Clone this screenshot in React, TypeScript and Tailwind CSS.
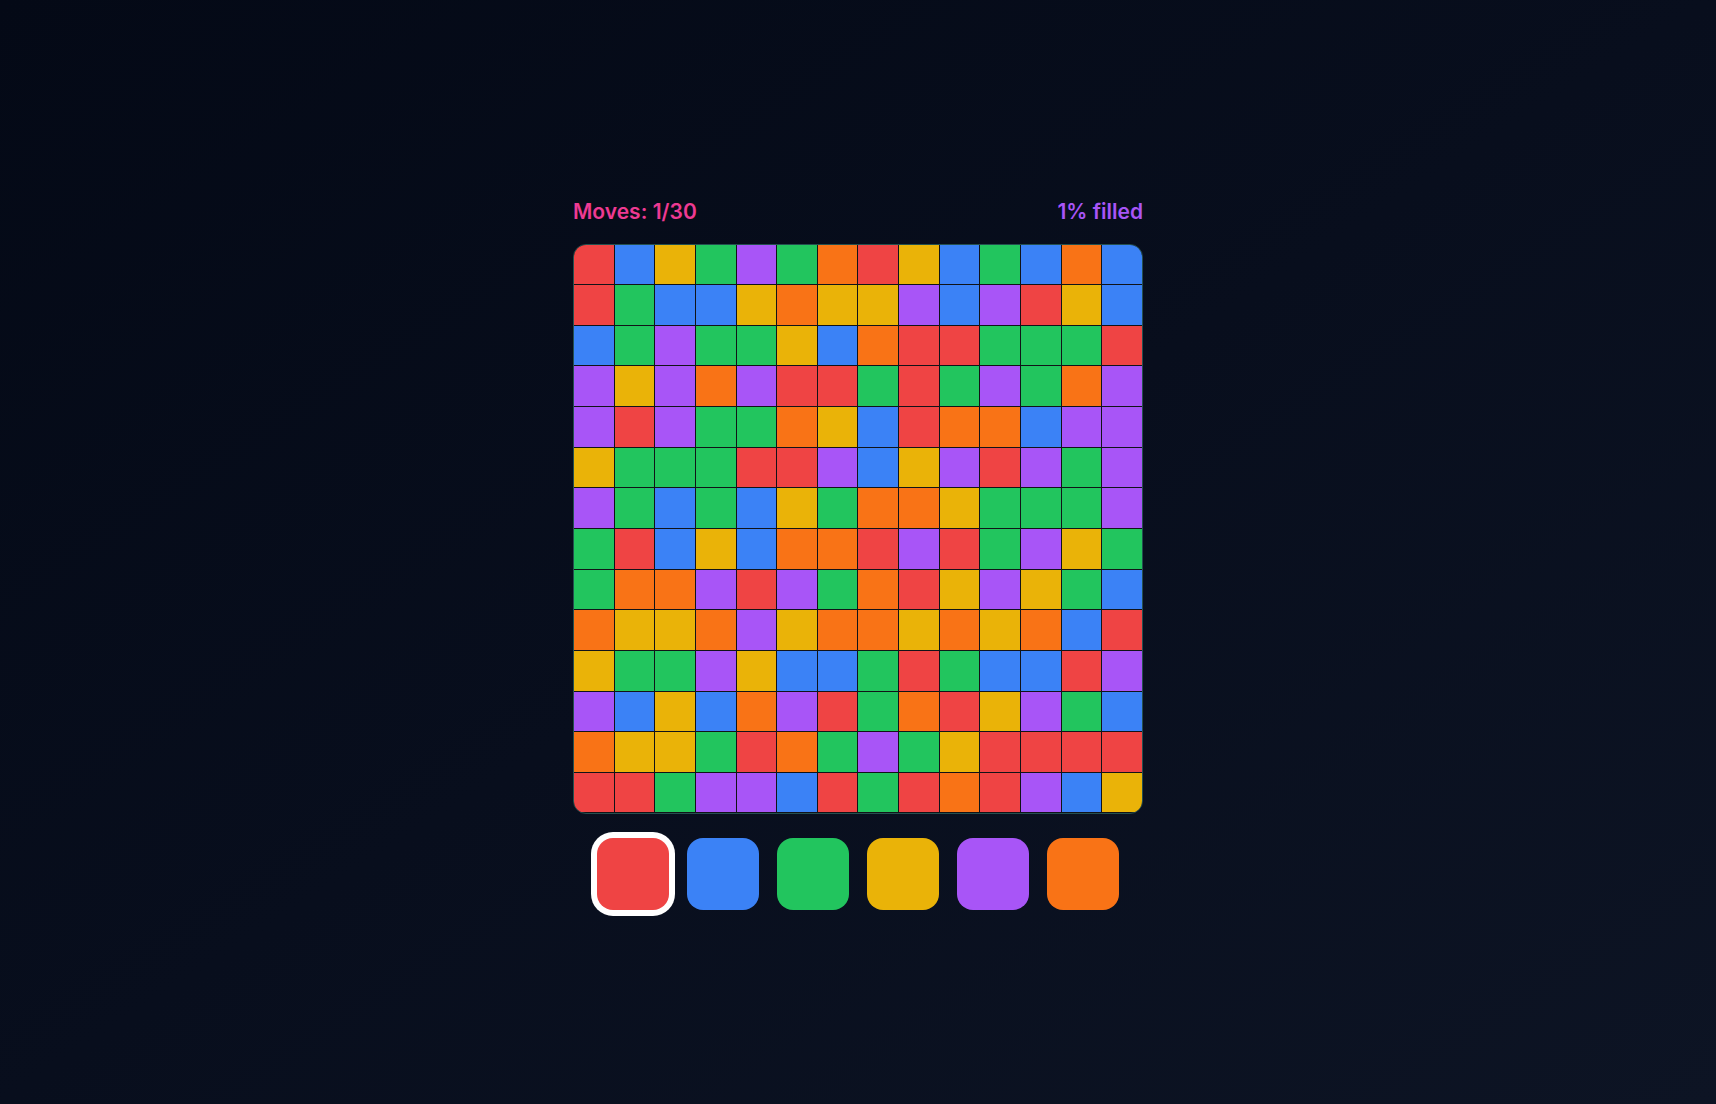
import { useState } from "react";

type Color = "R" | "B" | "G" | "Y" | "P" | "O";

const COLORS: Record<Color, string> = {
  R: "bg-[#ef4444]",
  B: "bg-[#3b82f6]",
  G: "bg-[#22c55e]",
  Y: "bg-[#eab308]",
  P: "bg-[#a855f7]",
  O: "bg-[#f97316]",
};

const PALETTE: Color[] = ["R", "B", "G", "Y", "P", "O"];

// starting board, one string per row
const BOARD = [
  "RBYGPGORYBGBOB",
  "RGBBYOYYPBPRYB",
  "BGPGGYBORRGGGR",
  "PYPOPRRGRGPGOP",
  "PRPGGOYBROOBPP",
  "YGGGRRPBYPRPGP",
  "PGBGBYGOOYGGGP",
  "GRBYBOORPRGPYG",
  "GOOPRPGORYPYGB",
  "OYYOPYOOYOYOBR",
  "YGGPYBBGRGBBRP",
  "PBYBOPRGORYPGB",
  "OYYGROGPGYRRRR",
  "RRGPPBRGRORPBY",
].map((row) => row.split("") as Color[]);

export default function App() {
  const [selected, setSelected] = useState<Color>("R");
  const moves = 1;
  const maxMoves = 30;

  return (
    <div className="flex min-h-screen items-center justify-center bg-linear-to-br from-[#040916] via-[#080e1d] to-[#0d1424] pt-[3px] font-['Inter','Noto_Sans',sans-serif]">
      <div className="flex w-[570px] flex-col items-center">
        <div className="mb-[18px] flex w-full items-center justify-between text-[21px] font-semibold leading-7">
          <span className="text-[#ee3a92]">
            Moves: {moves}/{maxMoves}
          </span>
          <span className="text-[#a855f7]">1% filled</span>
        </div>

        <div className="h-[570px] w-[570px] overflow-hidden rounded-[13px] border border-[#24504f] bg-[#111318]">
          <div className="grid h-full w-full grid-cols-14 grid-rows-14 gap-px">
            {BOARD.map((row, r) =>
              row.map((c, i) => (
                <div key={`${r}-${i}`} className={COLORS[c]} />
              ))
            )}
          </div>
        </div>

        <div className="mt-6 flex gap-[18px]">
          {PALETTE.map((c) => (
            <button
              key={c}
              type="button"
              onClick={() => setSelected(c)}
              className={`h-[72px] w-[72px] rounded-2xl ${COLORS[c]} ${
                selected === c ? "ring-[6px] ring-white" : ""
              }`}
              aria-label={c}
            />
          ))}
        </div>
      </div>
    </div>
  );
}
